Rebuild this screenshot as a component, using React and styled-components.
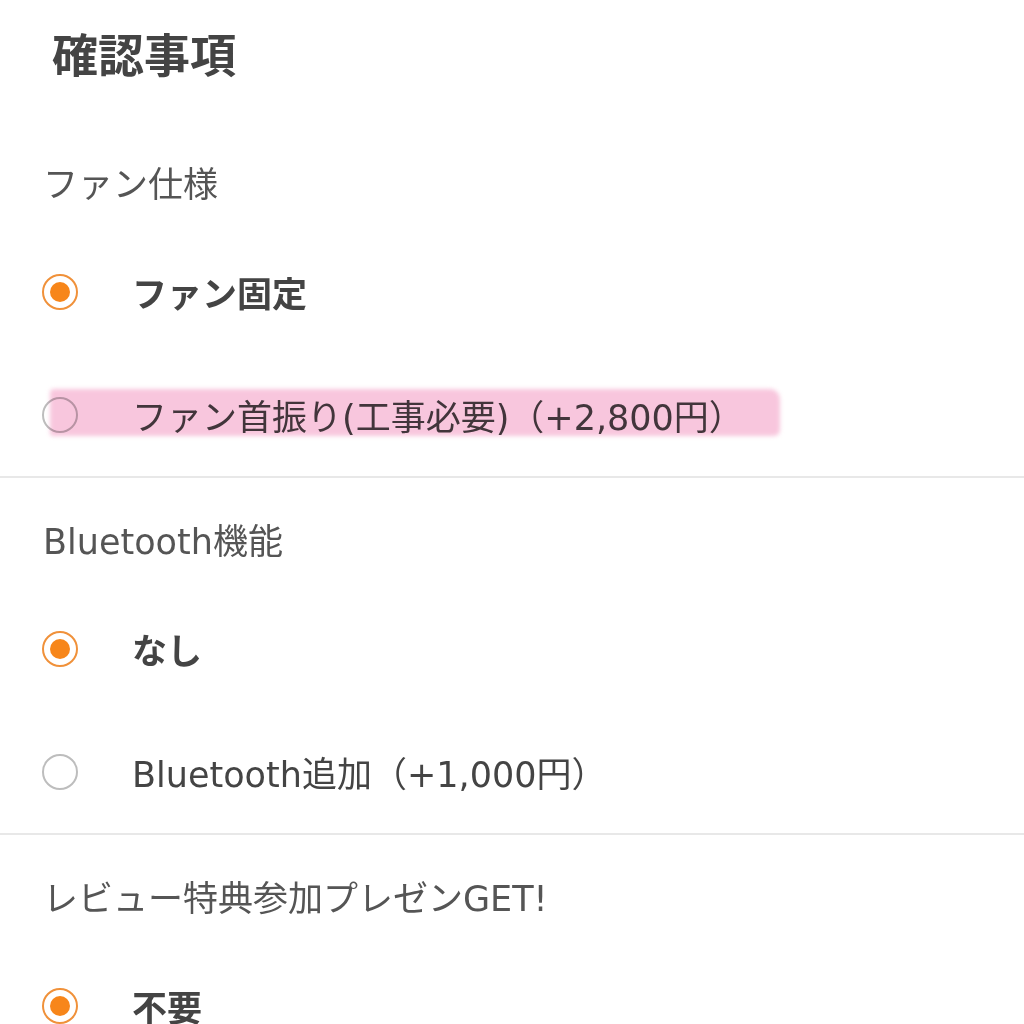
import React from 'react'
import styled, { createGlobalStyle } from 'styled-components'

const Global = createGlobalStyle`
  html, body {
    margin: 0;
    padding: 0;
    background: #fff;
  }
  body {
    font-family: "DejaVu Sans", "Noto Sans CJK JP", sans-serif;
    color: #444;
  }
`

const Page = styled.div`
  width: 1024px;
  height: 1024px;
  overflow: hidden;
  background: #fff;
`

const Title = styled.h1`
  margin: 0;
  padding: 22px 0 0 52px;
  height: 102px;
  box-sizing: border-box;
  font-family: "Noto Sans CJK JP", sans-serif;
  font-size: 46px;
  line-height: 60px;
  font-weight: 700;
  color: #444;
`

const Section = styled.section`
  border-bottom: 2px solid #e8e8e8;
`

const Label = styled.div`
  padding: ${p => (p.first ? '58px' : '39px')} 0 0 43px;
  height: 50px;
  line-height: 50px;
  font-size: 35px;
  color: #555;
`

const Options = styled.div`
  padding-top: 20px;
`

const Option = styled.label`
  position: relative;
  display: flex;
  align-items: center;
  height: 123px;
  padding-left: 42px;
  font-size: 35px;
  font-weight: ${p => (p.checked ? 700 : 400)};
  color: #444;
`

const Radio = styled.span`
  width: 36px;
  height: 36px;
  box-sizing: border-box;
  border-radius: 50%;
  border: 2px solid ${p => (p.checked ? '#f0913a' : '#bdbdbd')};
  display: flex;
  align-items: center;
  justify-content: center;
  margin-right: 54px;
  flex-shrink: 0;

  &::after {
    content: '';
    display: ${p => (p.checked ? 'block' : 'none')};
    width: 20px;
    height: 20px;
    border-radius: 50%;
    background: #f7861a;
  }
`

const Marker = styled.span`
  position: absolute;
  left: 50px;
  top: 50%;
  width: 730px;
  height: 47px;
  margin-top: -26px;
  background: rgba(243, 160, 198, 0.6);
  mix-blend-mode: multiply;
  filter: blur(2px);
  border-radius: 4px 10px 6px 3px;
  pointer-events: none;
`

const sections = [
  {
    label: 'ファン仕様',
    options: [
      { text: 'ファン固定', checked: true },
      { text: 'ファン首振り(工事必要)（+2,800円）', marked: true },
    ],
  },
  {
    label: 'Bluetooth機能',
    options: [
      { text: 'なし', checked: true },
      { text: 'Bluetooth追加（+1,000円）' },
    ],
  },
  {
    label: 'レビュー特典参加プレゼンGET!',
    options: [{ text: '不要', checked: true }],
  },
]

export default function App() {
  return (
    <Page>
      <Global />
      <Title>確認事項</Title>
      {sections.map((s, i) => (
        <Section key={s.label}>
          <Label first={i === 0}>{s.label}</Label>
          <Options>
            {s.options.map(o => (
              <Option key={o.text} checked={o.checked}>
                <Radio checked={o.checked} />
                {o.text}
                {o.marked && <Marker />}
              </Option>
            ))}
          </Options>
        </Section>
      ))}
    </Page>
  )
}
